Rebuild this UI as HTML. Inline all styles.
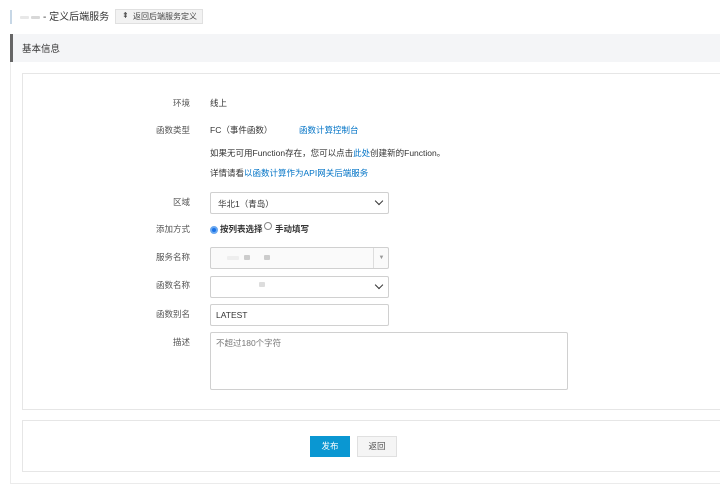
<!DOCTYPE html>
<html><head><meta charset="utf-8"><style>
*{box-sizing:border-box;margin:0;padding:0}
body{width:720px;height:492px;background:#fff;font-family:"Liberation Sans","Noto Sans CJK SC",sans-serif;font-size:8.5px;color:#333;position:relative;overflow:hidden}
.a{position:absolute;white-space:nowrap}
.lbl{position:absolute;width:80px;left:110px;text-align:right;color:#555;font-size:8.5px}
.box{position:absolute;border:1px solid #e6e6e6;background:#fff}
.in{position:absolute;left:210px;width:179px;height:22px;border:1px solid #d0d0d0;background:#fff;border-radius:2px}
.link{color:#0073c6}
.gb{position:absolute;background:#e8e8e8;border-radius:1px}
.chev{position:absolute;right:6px;top:7px;width:6px;height:6px;border-right:1.6px solid #333;border-bottom:1.6px solid #333;transform:rotate(45deg)}
</style></head><body>
<div class="a" style="left:10px;top:10px;width:2px;height:14px;background:#c7d7e6"></div>
<div class="gb" style="left:20px;top:16px;width:9px;height:3px"></div>
<div class="gb" style="left:31px;top:16px;width:9px;height:3px;background:#d8d8d8"></div>
<div class="a" style="left:43px;top:8px;font-size:10px;color:#333">- 定义后端服务</div>
<div class="a" style="left:115px;top:9px;width:88px;height:15px;background:#f2f2f2;border:1px solid #e0e0e0;font-size:8px;line-height:13px;padding-left:17px;color:#444">返回后端服务定义</div>
<div class="a" style="left:122px;top:11px;font-size:8px;color:#333">⇞</div>
<div class="box" style="left:10px;top:34px;width:720px;height:450px;border-color:#ebebeb"></div>
<div class="a" style="left:10px;top:34px;width:710px;height:28px;background:#f4f5f7;border-left:3px solid #666"></div>
<div class="a" style="left:22px;top:41px;font-size:9.5px;color:#333">基本信息</div>
<div class="box" style="left:22px;top:73px;width:710px;height:337px"></div>
<div class="box" style="left:22px;top:420px;width:710px;height:52px"></div>

<div class="lbl" style="top:97px">环境</div><div class="a" style="left:210px;top:97px">线上</div>
<div class="lbl" style="top:124px">函数类型</div><div class="a" style="left:210px;top:124px">FC（事件函数）</div>
<div class="a link" style="left:299px;top:124px">函数计算控制台</div>
<div class="a" style="left:210px;top:147px">如果无可用Function存在，您可以点击<span class="link">此处</span>创建新的Function。</div>
<div class="a" style="left:210px;top:167px">详情请看<span class="link">以函数计算作为API网关后端服务</span></div>
<div class="lbl" style="top:196px">区域</div>
<div class="in" style="top:192px"><span class="a" style="left:7px;top:5px">华北1（青岛）</span><span class="chev" style="top:5px"></span></div>
<div class="lbl" style="top:223px">添加方式</div>
<div class="a" style="left:210px;top:226px;width:8px;height:8px;border-radius:50%;background:#1a73e8;border:2px solid #6aa8f0"></div>
<div class="a" style="left:220px;top:223px;font-weight:bold">按列表选择</div>
<div class="a" style="left:264px;top:222px;width:8px;height:8px;border-radius:50%;border:1px solid #888"></div>
<div class="a" style="left:275px;top:223px;font-weight:bold">手动填写</div>
<div class="lbl" style="top:251px">服务名称</div>
<div class="in" style="top:247px;background:#fafafa"><div class="gb" style="left:16px;top:8px;width:12px;height:4px;background:#eee"></div><div class="gb" style="left:33px;top:7px;width:6px;height:5px;background:#ccc"></div><div class="gb" style="left:53px;top:7px;width:6px;height:5px;background:#ccc"></div><span class="a" style="left:162px;top:0;width:16px;height:20px;border-left:1px solid #ddd;text-align:center;font-size:6px;line-height:20px;color:#999">▼</span></div>
<div class="lbl" style="top:279px">函数名称</div>
<div class="in" style="top:276px"><div class="gb" style="left:48px;top:5px;width:6px;height:5px;background:#ddd"></div><span class="chev" style="top:5px"></span></div>
<div class="lbl" style="top:308px">函数别名</div>
<div class="in" style="top:304px"><span class="a" style="left:5px;top:5px">LATEST</span></div>
<div class="lbl" style="top:336px">描述</div>
<div class="in" style="top:332px;width:358px;height:58px"><span class="a" style="left:5px;top:4px;color:#777">不超过180个字符</span></div>
<div class="a" style="left:310px;top:436px;width:40px;height:21px;background:#0a97d2;color:#fff;text-align:center;line-height:21px">发布</div>
<div class="a" style="left:357px;top:436px;width:40px;height:21px;background:#f5f5f5;border:1px solid #e0e0e0;color:#555;text-align:center;line-height:19px">返回</div>
</body></html>
